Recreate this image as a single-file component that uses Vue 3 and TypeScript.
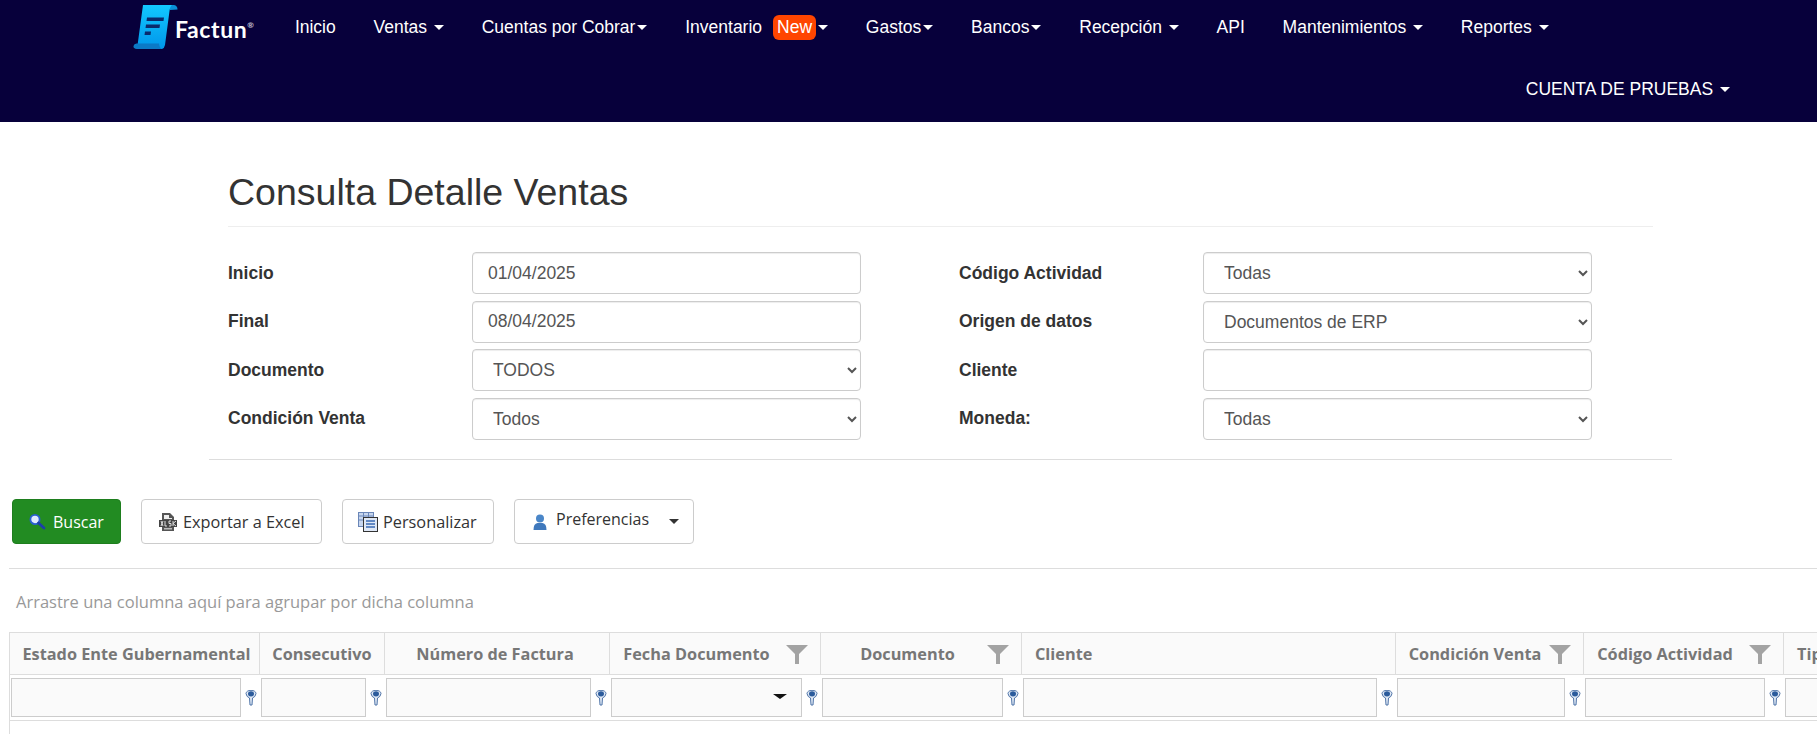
<script setup lang="ts">
interface NavItem { label: string; caret?: boolean; tight?: boolean; badge?: string }
const navItems: NavItem[] = [
  { label: 'Inicio' },
  { label: 'Ventas', caret: true },
  { label: 'Cuentas por Cobrar', caret: true, tight: true },
  { label: 'Inventario', caret: true, tight: true, badge: 'New' },
  { label: 'Gastos', caret: true, tight: true },
  { label: 'Bancos', caret: true, tight: true },
  { label: 'Recepción', caret: true },
  { label: 'API' },
  { label: 'Mantenimientos', caret: true },
  { label: 'Reportes', caret: true },
]
interface Col { label: string; width: number; filter?: boolean; align?: string; dropdown?: boolean; padL?: number; padR?: number }
const cols: Col[] = [
  { label: 'Estado Ente Gubernamental', width: 250, padL: 4 },
  { label: 'Consecutivo', width: 125 },
  { label: 'Número de Factura', width: 225, padR: 4 },
  { label: 'Fecha Documento', width: 211, filter: true, dropdown: true },
  { label: 'Documento', width: 201, filter: true, padL: 10 },
  { label: 'Cliente', width: 374, align: 'left' },
  { label: 'Condición Venta', width: 188, filter: true, padL: 8 },
  { label: 'Código Actividad', width: 200, filter: true },
  { label: 'Tipo', width: 200, align: 'left' },
]
const gridTemplate = cols.map(c => c.width + 'px').join(' ')
</script>

<template>
  <div class="page">
    <header class="navbar">
      <div class="nav-row">
        <a class="brand">
          <svg class="brand-mark" width="46" height="46" viewBox="0 0 46 46">
            <defs>
              <linearGradient id="scroll" x1="0" y1="0" x2="0" y2="1">
                <stop offset="0" stop-color="#12c8ff" />
                <stop offset="1" stop-color="#0096ea" />
              </linearGradient>
            </defs>
            <path d="M36 1 H41 Q44.5 1.5 44.5 5.5 L37 6 Z" fill="#0a8fd8" />
            <path d="M10 1 H39 Q37 2.5 36.5 7 L32 41 Q31.5 44 29 45 H4 Z" fill="url(#scroll)" />
            <path d="M3.5 39.5 H26 Q26.5 44 29 45 H4 Q0 44.5 0.5 42 Q1 39.5 3.5 39.5 Z" fill="#0b79c6" />
            <path d="M14 13.5 H31 L30.5 17 H13.5 Z M13 20.5 H27 L26.5 24 H12.5 Z M12 27.5 H18 L17.5 31 H11.5 Z" fill="#0a2a6c" />
          </svg>
          <span class="brand-text">Factun<sup>®</sup></span>
        </a>
        <a v-for="item in navItems" :key="item.label" class="nav-link">
          {{ item.label }}<span v-if="item.badge" class="badge">{{ item.badge }}</span><template v-if="item.caret && !item.tight">&nbsp;</template><span v-if="item.caret" class="caret"></span>
        </a>
      </div>
      <div class="nav-row nav-right">
        <a class="nav-link account">CUENTA DE PRUEBAS&nbsp;<span class="caret"></span></a>
      </div>
    </header>

    <main class="content">
      <section class="filters">
        <h1 class="title">Consulta Detalle Ventas</h1>
        <div class="form-grid">
          <div class="form-col">
            <div class="form-row"><label>Inicio</label><input class="ctl" value="01/04/2025" /></div>
            <div class="form-row"><label>Final</label><input class="ctl" value="08/04/2025" /></div>
            <div class="form-row"><label>Documento</label><select class="ctl"><option>TODOS</option></select></div>
            <div class="form-row"><label>Condición Venta</label><select class="ctl"><option>Todos</option></select></div>
          </div>
          <div class="form-col">
            <div class="form-row"><label>Código Actividad</label><select class="ctl"><option>Todas</option></select></div>
            <div class="form-row"><label>Origen de datos</label><select class="ctl"><option>Documentos de ERP</option></select></div>
            <div class="form-row"><label>Cliente</label><input class="ctl" /></div>
            <div class="form-row"><label>Moneda:</label><select class="ctl"><option>Todas</option></select></div>
          </div>
        </div>
      </section>
      <hr class="rule-mid" />

      <div class="toolbar">
        <button class="btn btn-go">
          <svg width="18" height="18" viewBox="0 0 18 18"><circle cx="7" cy="6.5" r="4.6" fill="#dfeaff" stroke="#2a5fd0" stroke-width="1.8" /><path d="M10.5 10 L16 15" stroke="#1c3fa8" stroke-width="2.8" stroke-linecap="round" /></svg>
          Buscar
        </button>
        <button class="btn btn-excel">
          <svg width="20" height="20" viewBox="0 0 20 20"><path d="M4 1 H12 L16 5 V19 H4 Z" fill="#555" /><path d="M6 3 H11 V6 H14 V7 H6 Z" fill="#eee" /><rect x="1" y="8" width="18" height="7" fill="#444" /><path d="M3 9 L5 14 M5 9 L3 14 M7 9 V14 H9 M11 9 H13 M11 14 H13 V11.5 H11 V9 M15 9 V14 M15 11.5 L18 9 M15 11.5 L18 14" stroke="#eee" stroke-width=".9" fill="none" /><rect x="6" y="16" width="8" height="1.5" fill="#bbb" /></svg>
          Exportar a Excel
        </button>
        <button class="btn btn-custom">
          <svg width="20" height="20" viewBox="0 0 20 20"><rect x="0.5" y="0.5" width="15" height="14" fill="#c7d6ee" stroke="#6a86b8" /><path d="M0.5 4 H15.5 M0.5 8 H15.5 M5.5 0.5 V14 M10.5 0.5 V14" stroke="#6a86b8" /><rect x="5.5" y="5.5" width="14" height="14" fill="#dfe8f6" stroke="#333" /><path d="M8 9 H17 M8 12 H17 M8 15 H17" stroke="#3a69b4" stroke-width="1.4" /></svg>
          Personalizar
        </button>
        <button class="btn btn-prefs">
          <svg width="16" height="18" viewBox="0 0 16 18"><circle cx="8" cy="5.5" r="4" fill="#4a86c8" /><path d="M1.5 17 Q1.5 10.5 5.5 10 H10.5 Q14.5 10.5 14.5 17 Z" fill="#3f78bc" /></svg>
          <span class="prefs-label">Preferencias</span>
          <span class="caret dark"></span>
        </button>
      </div>
      <hr class="rule-low" />

      <p class="group-hint">Arrastre una columna aquí para agrupar por dicha columna</p>

      <div class="grid">
        <div class="grid-head" :style="{ gridTemplateColumns: gridTemplate }">
          <div v-for="c in cols" :key="c.label" class="th" :class="{ left: c.align === 'left' }">
            <span class="th-label" :style="{ paddingLeft: c.padL ? c.padL + 'px' : undefined, paddingRight: c.padR ? c.padR + 'px' : undefined }">{{ c.label }}</span>
            <svg v-if="c.filter" class="funnel" width="22" height="20" viewBox="0 0 22 20"><path d="M0 1 H22 L13 10 V20 H9 V10 Z" fill="#a3a3a3" /></svg>
          </div>
        </div>
        <div class="grid-filter" :style="{ gridTemplateColumns: gridTemplate }">
          <div v-for="c in cols" :key="c.label" class="fc">
            <div class="f-input"><span v-if="c.dropdown" class="f-arrow"></span></div>
            <svg class="f-icon" width="12" height="16" viewBox="0 0 12 16"><path d="M1 3.5 A5 3.2 0 0 1 11 3.5 Q10.5 7 7.5 8 L7 15 H5 L4.5 8 Q1.5 7 1 3.5 Z" fill="#dfe8f4" stroke="#4f74a8" /><ellipse cx="6" cy="3.8" rx="3" ry="2.6" fill="#2b5b9c" /></svg>
          </div>
        </div>
        <div class="grid-body"></div>
      </div>
    </main>
  </div>
</template>

<style>
html, body { margin: 0; background: #fff; overflow: hidden; }
</style>

<style scoped>
.page { width: 1817px; height: 734px; overflow: hidden; font-family: "Liberation Sans", Arial, sans-serif; color: #333; background: #fff; }

.navbar { background: #07003b; height: 122px; box-sizing: border-box; padding-left: 133px; padding-right: 73px; }
.nav-row { display: flex; align-items: center; height: 54px; }
.nav-right { justify-content: flex-end; margin-top: 8px; }
.brand { display: flex; align-items: center; width: 143px; height: 54px; flex: none; }
.brand-mark { flex: none; }
.brand-text { margin-left: -4px; color: #fff; font-family: Lato, sans-serif; font-weight: 700; font-size: 23px; letter-spacing: .6px; margin-top: 4px; }
.brand-text sup { font-size: 8px; vertical-align: 10px; line-height: 0; color: #c8c8d8; }
.nav-link { color: #fff; font-size: 17.5px; padding: 0 18.9px; white-space: nowrap; display: flex; align-items: center; }
.account { padding-right: 14px; }
.badge { background: #ff4500; color: #fff; border-radius: 6px; padding: 0 4px; margin-left: 11px; height: 25px; box-sizing: border-box; display: inline-flex; align-items: center; }
.caret { display: inline-block; width: 0; height: 0; margin-left: 2px; border-top: 5px solid #fff; border-left: 5px solid transparent; border-right: 5px solid transparent; }
.caret.dark { border-top-color: #333; margin-left: 0; }

.content { display: block; }
.filters { width: 1425px; margin-left: 228px; }
.title { margin: 0; padding-top: 50px; height: 54px; font-size: 37.5px; line-height: 40px; font-weight: 400; color: #333; border-bottom: 1px solid #eee; }
.form-grid { display: flex; margin-top: 25px; }
.form-col { width: 731px; flex: none; }
.form-row { display: flex; align-items: center; height: 42px; margin-bottom: 6.6px; }
.form-row label { width: 244px; font-weight: 700; font-size: 17.5px; }
.ctl { width: 389px; height: 42px; box-sizing: border-box; border: 1px solid #ccc; border-radius: 4px; background: #fff; color: #555; font-family: "Liberation Sans", Arial, sans-serif; font-size: 17.5px; padding: 6px 15px; box-shadow: inset 0 1px 1px rgba(0,0,0,.075); outline: none; }
select.ctl { padding-left: 16px; }

.rule-mid { margin: 13px 145px 0 209px; border: 0; border-top: 1px solid #ddd; }
.toolbar { display: flex; margin: 39px 0 0 12px; height: 45px; }
.btn { height: 45px; box-sizing: border-box; border: 1px solid #ccc; border-radius: 4px; background: #fff; color: #333; font-family: "Open Sans", sans-serif; font-size: 16.3px; display: flex; align-items: center; padding: 0; }
.btn-go { width: 109px; background: #228b22; border-color: #1e7e1e; color: #fff; padding-left: 15px; gap: 7px; font-size: 16px; }
.btn-excel { width: 181px; margin-left: 20px; padding-left: 16px; gap: 5px; }
.btn-custom { width: 152px; margin-left: 20px; padding-left: 15px; gap: 5px; }
.btn-prefs { width: 180px; margin-left: 20px; padding-left: 17px; font-size: 16px; }
.prefs-label { margin-left: 8px; margin-right: 20px; margin-top: -6px; }

.rule-low { margin: 24px 0 0 9px; border: 0; border-top: 1px solid #ddd; }
.group-hint { margin: 22px 0 0 16px; font-family: "Open Sans", sans-serif; font-size: 16.5px; line-height: 22px; color: #999; height: 20px; }

.grid { margin: 21px 0 0 9px; border-left: 1px solid #ddd; }
.grid-head, .grid-filter { display: grid; }
.grid-head { height: 43px; box-sizing: border-box; border-top: 1px solid #ddd; border-bottom: 1px solid #ddd; background: #fafafa; }
.th { display: flex; align-items: center; border-right: 1px solid #ddd; box-sizing: border-box; font-family: "Open Sans", sans-serif; font-weight: 700; font-size: 16.3px; color: #777; white-space: nowrap; overflow: hidden; }
.th-label { flex: 1; text-align: center; }
.th.left .th-label { text-align: left; padding-left: 13px; }
.funnel { margin-right: 12px; margin-left: 3px; flex: none; }
.grid-filter { height: 46px; box-sizing: border-box; border-bottom: 1px solid #ddd; }
.fc { display: flex; align-items: center; padding-left: 1px; box-sizing: border-box; height: 45px; }
.f-input { flex: 1; min-width: 0; height: 39px; box-sizing: border-box; border: 1px solid #ccc; background: #fafafa; position: relative; }
.f-arrow { position: absolute; right: 14px; top: 15px; width: 0; height: 0; border-top: 5px solid #111; border-left: 7px solid transparent; border-right: 7px solid transparent; }
.f-icon { flex: none; margin: 0 3px 0 4px; }
.grid-body { height: 20px; }
</style>
